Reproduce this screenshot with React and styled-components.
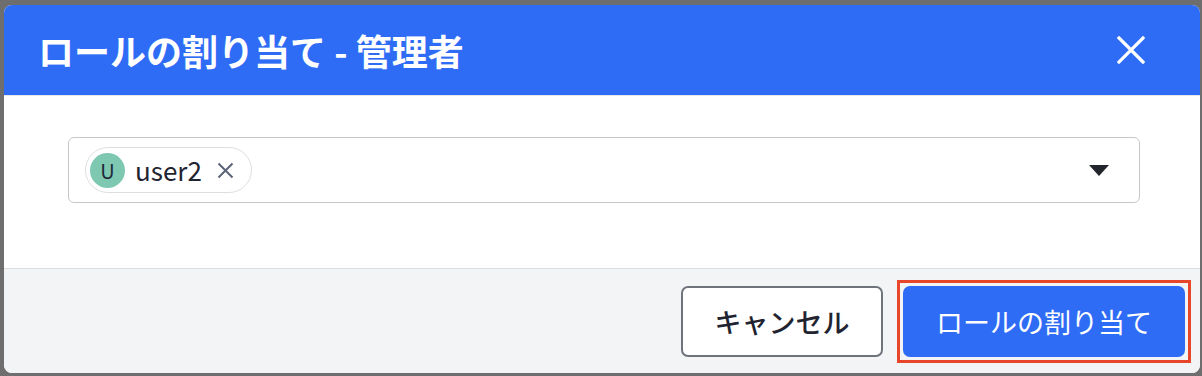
import React from 'react';
import styled, { createGlobalStyle } from 'styled-components';

const GlobalStyle = createGlobalStyle`
  html, body {
    margin: 0;
    padding: 0;
    background: #6e6e6e;
    font-family: "Noto Sans CJK JP", "Noto Sans", sans-serif;
  }
`;

const Page = styled.div`
  width: 1202px;
  height: 376px;
  padding: 5px 0 0 4px;
  box-sizing: border-box;
  overflow: hidden;
`;

const Modal = styled.div`
  width: 1196px;
  height: 368px;
  display: flex;
  flex-direction: column;
  border-radius: 8px;
  overflow: hidden;
  background: #fff;
`;

const Header = styled.header`
  height: 90px;
  flex: none;
  display: flex;
  align-items: center;
  justify-content: space-between;
  padding: 0 52px 0 34px;
  background: #2f6cf6;
  border-bottom: 1px solid #e4e6ea;
`;

const Title = styled.h1`
  margin: 0;
  color: #fff;
  font-size: 36px;
  font-weight: 700;
`;

const CloseButton = styled.button`
  width: 34px;
  height: 34px;
  padding: 0;
  border: none;
  background: none;
  display: flex;
  align-items: center;
  justify-content: center;
  cursor: pointer;
`;

const Body = styled.div`
  flex: 1;
  padding: 41px 60px 0 64px;
`;

const Select = styled.div`
  height: 66px;
  box-sizing: border-box;
  display: flex;
  align-items: center;
  justify-content: space-between;
  padding: 0 30px 0 16px;
  border: 1px solid #c6c7c9;
  border-radius: 6px;
`;

const Chip = styled.div`
  height: 46px;
  box-sizing: border-box;
  display: flex;
  align-items: center;
  gap: 10px;
  padding: 0 17px 0 4px;
  border: 1.5px solid #dddedf;
  border-radius: 23px;
`;

const Avatar = styled.span`
  width: 35px;
  height: 35px;
  border-radius: 50%;
  background: #7ec8b2;
  color: #1f2937;
  display: flex;
  align-items: center;
  justify-content: center;
  font-size: 20px;
`;

const ChipLabel = styled.span`
  font-size: 26px;
  color: #1f2430;
  margin-top: -2px;
`;

const ChipRemove = styled.span`
  display: flex;
  margin-left: 5px;
`;

const Caret = styled.span`
  width: 0;
  height: 0;
  border-left: 10px solid transparent;
  border-right: 10px solid transparent;
  border-top: 11px solid #22252b;
`;

const Footer = styled.footer`
  height: 104px;
  flex: none;
  display: flex;
  align-items: center;
  justify-content: flex-end;
  gap: 14px;
  padding: 0 9px;
  background: #f3f4f6;
  border-top: 1px solid #dcdde0;
`;

const Button = styled.button`
  height: 71px;
  width: ${(props) => props.width}px;
  box-sizing: border-box;
  border-radius: 7px;
  font-family: inherit;
  font-size: 27px;
  font-weight: ${(props) => (props.primary ? 400 : 500)};
  cursor: pointer;
  background: ${(props) => (props.primary ? '#2f6cf6' : '#fff')};
  color: ${(props) => (props.primary ? '#fff' : '#1f2430')};
  border: 2px solid ${(props) => (props.primary ? '#2f6cf6' : '#6f747c')};
`;

const Highlight = styled.div`
  padding: 3px;
  border: 3px solid #e8462b;
  display: flex;
`;

const App = () => (
  <Page>
    <GlobalStyle />
    <Modal>
      <Header>
        <Title>ロールの割り当て - 管理者</Title>
        <CloseButton aria-label="close">
          <svg width="28" height="28" viewBox="0 0 28 28">
            <path d="M2 2L26 26M26 2L2 26" stroke="#fff" strokeWidth="3.2" strokeLinecap="square" />
          </svg>
        </CloseButton>
      </Header>
      <Body>
        <Select>
          <Chip>
            <Avatar>U</Avatar>
            <ChipLabel>user2</ChipLabel>
            <ChipRemove>
              <svg width="17" height="17" viewBox="0 0 17 17">
                <path d="M1.5 1.5L15.5 15.5M15.5 1.5L1.5 15.5" stroke="#5b6478" strokeWidth="2" />
              </svg>
            </ChipRemove>
          </Chip>
          <Caret />
        </Select>
      </Body>
      <Footer>
        <Button width={202}>キャンセル</Button>
        <Highlight>
          <Button primary width={282}>ロールの割り当て</Button>
        </Highlight>
      </Footer>
    </Modal>
  </Page>
);

export default App;
